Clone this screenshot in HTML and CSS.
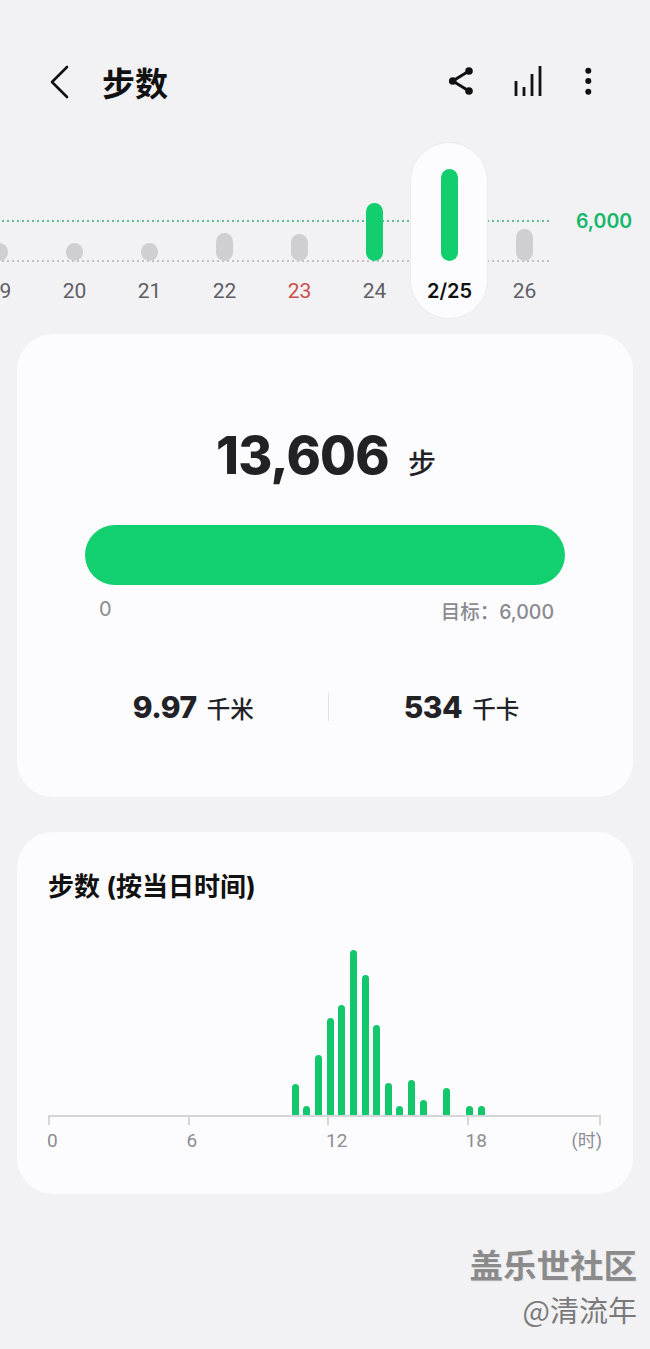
FILE: index.html
```html
<!DOCTYPE html>
<html lang="zh-CN">
<head>
  <meta charset="UTF-8">
  <meta name="viewport" content="width=device-width, initial-scale=1.0">
  <title>步数</title>
  <link rel="stylesheet" href="styles.css">
</head>
<body>
  <header class="app-bar">
    <svg class="back-icon" width="24" height="36" viewBox="0 0 24 36"><path d="M19 3 4 18l15 15" fill="none" stroke="#111" stroke-width="2.6" stroke-linecap="round" stroke-linejoin="round"/></svg>
    <h1 class="page-title">步数</h1>
    <div class="app-actions">
      <svg width="30" height="36" viewBox="0 0 30 36"><path d="M23 7 6.7 17 23 27" fill="none" stroke="#111" stroke-width="3"/><circle cx="23" cy="7" r="3.8" fill="#111"/><circle cx="6.7" cy="17" r="3.8" fill="#111"/><circle cx="23" cy="27" r="3.8" fill="#111"/></svg>
      <svg width="32" height="36" viewBox="0 0 32 36"><path d="M3 17v15M11 23v9M19 10v22M27 2v30" fill="none" stroke="#111" stroke-width="2.8"/></svg>
      <svg width="12" height="36" viewBox="0 0 12 36"><circle cx="6.3" cy="6.7" r="3" fill="#111"/><circle cx="6.3" cy="17" r="3" fill="#111"/><circle cx="6.3" cy="27.7" r="3" fill="#111"/></svg>
    </div>
  </header>

  <section class="day-strip">
    <div class="goal-line"></div>
    <div class="base-line"></div>
    <span class="goal-label">6,000</span>
    <div class="day"><div class="day-plot"><i class="day-bar" style="height: 18px"></i></div><span class="day-label">19</span></div>
    <div class="day"><div class="day-plot"><i class="day-bar" style="height: 18px"></i></div><span class="day-label">20</span></div>
    <div class="day"><div class="day-plot"><i class="day-bar" style="height: 18px"></i></div><span class="day-label">21</span></div>
    <div class="day"><div class="day-plot"><i class="day-bar" style="height: 28px"></i></div><span class="day-label">22</span></div>
    <div class="day"><div class="day-plot"><i class="day-bar" style="height: 27px"></i></div><span class="day-label holiday">23</span></div>
    <div class="day"><div class="day-plot"><i class="day-bar done" style="height: 58px"></i></div><span class="day-label">24</span></div>
    <div class="day selected"><div class="day-plot"><i class="day-bar done" style="height: 92px"></i></div><span class="day-label">2/25</span></div>
    <div class="day"><div class="day-plot"><i class="day-bar" style="height: 32px"></i></div><span class="day-label">26</span></div>
  </section>

  <section class="card summary-card">
    <div class="step-total"><span class="step-count">13,606</span><span class="step-unit">步</span></div>
    <div class="progress-bar"></div>
    <div class="progress-scale"><span>0</span><span class="progress-goal">目标：6,000</span></div>
    <div class="stats">
      <div class="stat"><b>9.97</b><span>千米</span></div>
      <div class="stat-divider"></div>
      <div class="stat"><b>534</b><span>千卡</span></div>
    </div>
  </section>

  <section class="card hourly-card">
    <h2 class="hourly-title">步数 (按当日时间)</h2>
    <div class="hourly-plot">
      <i style="height: 31px"></i>
      <i style="height: 9px"></i>
      <i style="height: 60px"></i>
      <i style="height: 97px"></i>
      <i style="height: 110px"></i>
      <i style="height: 165px"></i>
      <i style="height: 140px"></i>
      <i style="height: 90px"></i>
      <i style="height: 32px"></i>
      <i style="height: 9px"></i>
      <i style="height: 35px"></i>
      <i style="height: 15px"></i>
      <i style="height: 0"></i>
      <i style="height: 27px"></i>
      <i style="height: 0"></i>
      <i style="height: 9px"></i>
      <i style="height: 9px"></i>
    </div>
    <div class="axis axis-ticks"><span></span><span></span><span></span><span></span></div>
    <div class="axis axis-labels"><span>0</span><span>6</span><span>12</span><span>18</span><span class="axis-unit">(时)</span></div>
  </section>

  <footer class="watermark">
    <div class="watermark-brand">盖乐世社区</div>
    <div class="watermark-user">@清流年</div>
  </footer>
</body>
</html>
```

FILE: styles.css
```css
html, body {
  height: 1349px;
  overflow: hidden;
}
body {
  margin: 0;
  background-color: #f2f2f5;
  color: #222226;
  font-family: Inter, "Noto Sans CJK SC", sans-serif;
}
.app-bar {
  display: flex;
  align-items: center;
  height: 36px;
  margin-top: 64px;
  padding: 0 56px 0 48px;
}
.app-bar svg {
  display: block;
}
.page-title {
  margin: 0 0 0 30px;
  font-family: "Noto Sans CJK SC", sans-serif;
  font-size: 33px;
  line-height: 36px;
  font-weight: 700;
  color: #111;
}
.app-actions {
  display: flex;
  gap: 37px;
  margin-left: auto;
}

.day-strip {
  position: relative;
  display: flex;
  height: 177px;
  margin: 42px 0 0 -38px;
}
.goal-line, .base-line {
  position: absolute;
  left: 0;
  width: 588px;
  height: 2px;
  background-size: 5px 2px;
}
.goal-line {
  top: 78px;
  background-image: linear-gradient(to right, #5fbf90 40%, transparent 0);
}
.base-line {
  top: 118px;
  background-image: linear-gradient(to right, #c2c2c5 40%, transparent 0);
}
.goal-label {
  position: absolute;
  left: 614px;
  top: 67px;
  font-size: 19.5px;
  line-height: 24px;
  font-weight: 600;
  color: #14b86a;
}
.day {
  position: relative;
  width: 75px;
  display: flex;
  flex-direction: column;
  align-items: center;
}
.day.selected::before {
  content: "";
  position: absolute;
  top: 0;
  bottom: 0;
  left: -2px;
  right: -1px;
  background: #fcfcfe;
  border: 1px solid #ebebee;
  border-radius: 39px;
  box-sizing: border-box;
}
.day-plot {
  position: relative;
  display: flex;
  align-items: flex-end;
  height: 119px;
}
.day-bar {
  display: block;
  width: 17px;
  background: #cfcfd1;
  border-radius: 9px;
}
.day-bar.done {
  background: #12ce6e;
}
.day-label {
  position: relative;
  margin-top: 18px;
  font-family: Roboto, sans-serif;
  font-size: 21px;
  line-height: 24px;
  color: #5e5e64;
}
.day-label.holiday {
  color: #c9504f;
}
.selected .day-label {
  font-family: Inter, sans-serif;
  font-size: 20px;
  font-weight: 600;
  color: #111;
}

.card {
  margin: 0 17px;
  background: #fcfcfe;
  border-radius: 36px;
  box-sizing: border-box;
}
.summary-card {
  height: 463px;
  margin-top: 15px;
  padding: 90px 68px 0;
}
.step-total {
  display: flex;
  align-items: baseline;
  justify-content: center;
  gap: 19px;
  height: 64px;
  padding-left: 2px;
  line-height: 64px;
}
.step-count {
  font-size: 52px;
  font-weight: 800;
  letter-spacing: -0.8px;
}
.step-unit {
  font-size: 28px;
  font-family: "Noto Sans CJK SC", sans-serif;
  font-weight: 500;
}
.progress-bar {
  height: 60px;
  margin-top: 37px;
  background: #12d06f;
  border-radius: 30px;
}
.progress-scale {
  display: flex;
  justify-content: space-between;
  height: 24px;
  margin-top: 12px;
  padding: 0 11px 0 14px;
  font-size: 20px;
  line-height: 24px;
  color: #8a8a8f;
}
.progress-goal {
  margin-top: 3px;
  font-size: 19.5px;
  font-weight: 500;
}
.stats {
  display: flex;
  justify-content: center;
  align-items: center;
  gap: 74.5px;
  height: 28px;
  margin-top: 72px;
  padding-left: 2px;
}
.stat {
  display: flex;
  align-items: baseline;
  gap: 10px;
  font-size: 23.5px;
  font-weight: 500;
  font-family: "Noto Sans CJK SC", sans-serif;
}
.stat b {
  font-family: Inter, sans-serif;
  font-size: 30px;
  font-weight: 800;
  letter-spacing: -0.5px;
}
.stat-divider {
  width: 1px;
  height: 28px;
  background: #e3e3e7;
}

.hourly-card {
  height: 362px;
  margin-top: 35px;
  padding: 37px 31px 0;
}
.hourly-title {
  margin: 0;
  font-family: Inter, "Noto Sans CJK SC", sans-serif;
  font-size: 26px;
  line-height: 36px;
  font-weight: 700;
  color: #111;
}
.hourly-plot {
  display: flex;
  align-items: flex-end;
  gap: 4.65px;
  height: 165px;
  margin-top: 45px;
  padding-left: 243.7px;
}
.hourly-plot i {
  display: block;
  width: 7px;
  background: #12c76c;
  border-radius: 4px 4px 0 0;
}
.axis {
  display: grid;
  grid-template-columns: 139.5px 139.5px 139.5px 1fr;
  width: 553px;
}
.axis-ticks {
  border-top: 2px solid #d6d6da;
}
.axis-ticks span {
  height: 8px;
  border-left: 2px solid #d6d6da;
}
.axis-ticks span:last-child {
  border-right: 2px solid #d6d6da;
}
.axis-labels {
  grid-template-columns: 139.5px 139.5px 139.5px 96px 1fr;
  margin-top: 4px;
  margin-left: -1px;
  font-family: Roboto, "Noto Sans CJK SC", sans-serif;
  font-size: 19px;
  line-height: 24px;
  color: #8d8d92;
}
.axis-unit {
  margin-right: -2px;
  text-align: right;
  white-space: nowrap;
  font-size: 18px;
}

.watermark {
  margin-top: 48px;
  padding-right: 13px;
  text-align: right;
  font-family: "Noto Sans CJK SC", sans-serif;
}
.watermark-brand {
  font-size: 33.5px;
  line-height: 44px;
  font-weight: 700;
  color: #8b8b8b;
  text-shadow: 1px 1px 0 #e4e4e4;
}
.watermark-user {
  margin-top: 1px;
  font-size: 29px;
  line-height: 44px;
  color: #7a7a7a;
}
```
